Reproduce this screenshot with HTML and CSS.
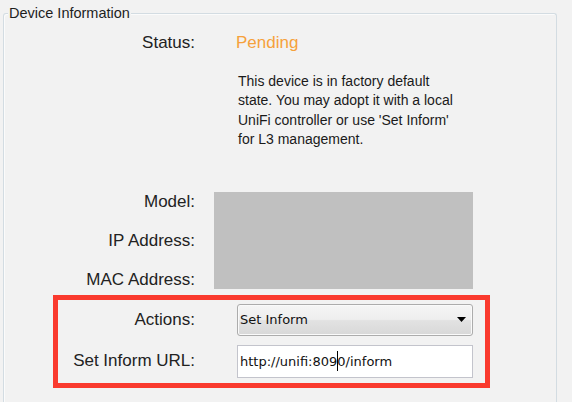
FILE: index.html
```html
<!DOCTYPE html>
<html>
<head>
<meta charset="utf-8">
<link rel="stylesheet" href="styles.css">
</head>
<body>
<div class="group">
  <span class="legend">Device Information</span>
  <div class="row status-row">
    <span class="label">Status:</span>
    <span class="status">Pending</span>
  </div>
  <p class="desc">This device is in factory default<br>state. You may adopt it with a local<br>UniFi controller or use 'Set Inform'<br>for L3 management.</p>
  <div class="ident">
    <span class="label">Model:</span>
    <span class="label">IP Address:</span>
    <span class="label">MAC Address:</span>
    <div class="redact"></div>
  </div>
  <div class="highlight">
    <div class="row hrow">
      <span class="label hlabel">Actions:</span>
      <div class="select">
        <span class="select-text">Set Inform</span>
        <svg class="arrow" width="9" height="5" viewBox="0 0 9 5"><path d="M0 0H9L4.5 5Z" fill="#000"/></svg>
      </div>
    </div>
    <div class="row hrow hrow2">
      <span class="label hlabel">Set Inform URL:</span>
      <div class="input"><span>http://unifi:809</span><span class="caret"></span><span>0/inform</span></div>
    </div>
  </div>
</div>
</body>
</html>
```
FILE: styles.css
```css
html, body {
  margin: 0;
  padding: 0;
  background: #f2f2f2;
}
body {
  font-family: "Liberation Sans", Arial, sans-serif;
  color: #222;
  height: 402px;
  overflow: hidden;
}
.group {
  position: relative;
  box-sizing: border-box;
  margin: 13px 0 0 3px;
  width: 554px;
  height: 389px;
  border: 1px solid #d3dce2;
  border-bottom: 0;
  border-radius: 3px 3px 0 0;
  box-shadow: inset 1px 1px 0 #fbfbfb;
  padding-top: 19px;
}
.legend {
  position: absolute;
  top: -9px;
  left: 4px;
  padding: 0 1px;
  background: #f2f2f2;
  font-size: 14.5px;
  line-height: 17px;
  color: #1e1e1e;
}
.row {
  display: flex;
  align-items: center;
}
.label {
  font-size: 17px;
  line-height: 20px;
  text-align: right;
  color: #222;
}
.status-row .label {
  width: 191px;
}
.status {
  margin-left: 41px;
  font-size: 17px;
  line-height: 20px;
  color: #f6a13b;
}
.desc {
  margin: 18.5px 0 0 234px;
  font-size: 14px;
  line-height: 19.5px;
  color: #1a1a1a;
}
.ident {
  display: grid;
  grid-template-columns: 191px 259px;
  grid-template-rows: 20px 20px 20px;
  column-gap: 19px;
  row-gap: 19px;
  margin-top: 42px;
}
.ident .label {
  grid-column: 1;
}
.redact {
  grid-column: 2;
  grid-row: 1 / 4;
  height: 97px;
  background: #c0c0c0;
}
.highlight {
  box-sizing: border-box;
  width: 437px;
  margin: 5px 0 0 49px;
  border: 5px solid #fa3a2e;
  padding: 4px 12px 5px 0;
}
.hlabel {
  width: 137px;
  flex: none;
}
.hrow {
  gap: 42px;
}
.hrow2 {
  margin-top: 9px;
}
.select {
  box-sizing: border-box;
  width: 236px;
  height: 32px;
  display: flex;
  align-items: center;
  justify-content: space-between;
  padding: 0 6px 0 2px;
  border: 1px solid #acacac;
  border-radius: 3px;
  background: linear-gradient(#f5f5f5 0%, #eeeeee 48%, #e2e2e2 52%, #d8d8d8 100%);
  box-shadow: inset 0 0 0 1px #fafafa;
  font-family: "DejaVu Sans", sans-serif;
  font-size: 13px;
  color: #111;
}
.arrow {
  display: block;
}
.input {
  box-sizing: border-box;
  width: 236px;
  height: 33px;
  display: flex;
  align-items: center;
  padding-left: 2px;
  border: 1px solid #c3c4cc;
  background: #fff;
  font-family: "DejaVu Sans", sans-serif;
  font-size: 13px;
  color: #111;
  white-space: pre;
}
.caret {
  display: inline-block;
  width: 1px;
  height: 20px;
  margin-right: -1px;
  background: #000;
}
```
